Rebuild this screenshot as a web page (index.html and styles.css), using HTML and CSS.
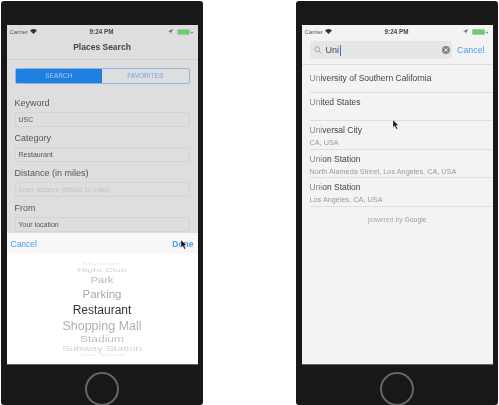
FILE: index.html
```html
<!DOCTYPE html>
<html lang="en">
<head>
    <meta charset="UTF-8">
    <title>Places Search</title>
    <link rel="stylesheet" href="styles.css">
</head>
<body>
    <div class="phone">
        <div class="screen screen-form">
            <div class="status">
                <span class="carrier">Carrier
                    <svg class="wifi" viewBox="0 0 10 7"><path d="M5 7 0 2a7 7 0 0 1 10 0z"/></svg>
                </span>
                <span class="time">9:24 PM</span>
                <span class="status-right">
                    <svg class="arrow" viewBox="0 0 6 6"><path d="M6 0 0 3h3v3z"/></svg>
                    <span class="battery"></span><span class="charge">+</span>
                </span>
            </div>
            <div class="nav">Places Search</div>
            <div class="form">
                <div class="segment">
                    <div class="seg seg-on">SEARCH</div>
                    <div class="seg">FAVORITES</div>
                </div>
                <div class="label label-first">Keyword</div>
                <div class="field">USC</div>
                <div class="label">Category</div>
                <div class="field">Restaurant</div>
                <div class="label">Distance (in miles)</div>
                <div class="field field-empty">Enter distance (default 10 miles)</div>
                <div class="label">From</div>
                <div class="field">Your location</div>
            </div>
            <div class="toolbar">
                <span>Cancel</span>
                <span class="done">Done</span>
            </div>
            <div class="picker">
                <div class="row r1">Museum</div>
                <div class="row r2">Night Club</div>
                <div class="row r3">Park</div>
                <div class="row r4">Parking</div>
                <div class="row r5">Restaurant</div>
                <div class="row r6">Shopping Mall</div>
                <div class="row r7">Stadium</div>
                <div class="row r8">Subway Station</div>
                <div class="row r9">Taxi Stand</div>
            </div>
            <svg class="cursor cursor-left" viewBox="0 0 8 12"><path d="M1 0v9l2-2 2 4 1.500-.7-2-4h3z"/></svg>
        </div>
        <div class="home"></div>
    </div>

    <div class="phone">
        <div class="screen screen-list">
            <div class="status">
                <span class="carrier">Carrier
                    <svg class="wifi" viewBox="0 0 10 7"><path d="M5 7 0 2a7 7 0 0 1 10 0z"/></svg>
                </span>
                <span class="time">9:24 PM</span>
                <span class="status-right">
                    <svg class="arrow" viewBox="0 0 6 6"><path d="M6 0 0 3h3v3z"/></svg>
                    <span class="battery"></span><span class="charge">+</span>
                </span>
            </div>
            <div class="searchbar">
                <div class="searchbox">
                    <svg class="lens" viewBox="0 0 10 10"><circle cx="4" cy="4" r="3"/><path d="M6.300 6.300 9.500 9.500"/></svg>
                    <span class="query">Uni</span><span class="caret"></span>
                    <span class="clear"><svg viewBox="0 0 8 8"><path d="M2.500 2.500l3 3M5.500 2.500l-3 3"/></svg></span>
                </div>
                <span class="search-cancel">Cancel</span>
            </div>
            <div class="results">
                <div class="result result-one"><div class="name"><span class="match">Un</span>iversity of Southern California</div></div>
                <div class="result result-two"><div class="name"><span class="match">Un</span>ited States</div></div>
                <div class="result result-sub">
                    <div class="name"><span class="match">Uni</span>versal City</div>
                    <div class="sub">CA, USA</div>
                </div>
                <div class="result result-sub">
                    <div class="name"><span class="match">Uni</span>on Station</div>
                    <div class="sub">North Alameda Street, Los Angeles, CA, USA</div>
                </div>
                <div class="result result-sub">
                    <div class="name"><span class="match">Uni</span>on Station</div>
                    <div class="sub">Los Angeles, CA, USA</div>
                </div>
            </div>
            <div class="powered">powered by <span class="google">Google</span></div>
            <svg class="cursor cursor-right" viewBox="0 0 8 12"><path d="M1 0v9l2-2 2 4 1.500-.7-2-4h3z"/></svg>
        </div>
        <div class="home"></div>
    </div>
</body>
</html>
```

FILE: styles.css
```css
body {
    margin: 0;
    padding: 1px 1px 0;
    height: 404px;
    overflow: hidden;
    display: flex;
    justify-content: space-between;
    background: #fff;
    font-family: "Liberation Sans", Arial, sans-serif;
    color: #333;
}
.phone {
    width: 202px;
    height: 404px;
    padding-top: 24px;
    box-sizing: border-box;
    background: #181818;
    border-radius: 3px;
    display: flex;
    flex-direction: column;
    align-items: center;
    overflow: hidden;
}
.screen {
    position: relative;
    width: 191px;
    height: 339px;
    flex: none;
    overflow: hidden;
    display: flex;
    flex-direction: column;
    border-bottom: 1px solid #666;
    filter: blur(0.45px);
}
.screen-form {
    background: #dedede;
}
.screen-list {
    background: #f3f3f3;
}
.home {
    width: 30px;
    height: 30px;
    margin-top: 7px;
    flex: none;
    border: 2px solid #666;
    border-radius: 50%;
}

/* status bar */
.status {
    height: 13px;
    flex: none;
    padding: 0 4px 0 3px;
    display: flex;
    align-items: center;
    justify-content: space-between;
    font-size: 6px;
    color: #555;
}
.carrier {
    width: 50px;
    display: flex;
    align-items: center;
    gap: 2px;
}
.wifi {
    width: 7px;
    height: 5px;
    fill: #333;
}
.time {
    font-size: 6.300px;
    font-weight: bold;
    color: #444;
}
.status-right {
    width: 50px;
    display: flex;
    align-items: center;
    justify-content: flex-end;
    gap: 1px;
}
.arrow {
    width: 5px;
    height: 5px;
    margin-right: 3px;
    fill: #555;
}
.battery {
    width: 11px;
    height: 4px;
    background: #5fd75f;
    border: 1px solid #bbb;
    border-radius: 1px;
}
.charge {
    font-size: 5px;
}

/* form screen */
.nav {
    height: 21px;
    flex: none;
    line-height: 19px;
    text-align: center;
    font-size: 8.500px;
    font-weight: bold;
    color: #444;
    border-bottom: 1px solid #cfcfcf;
}
.form {
    height: 173px;
    flex: none;
    padding: 8px 8px 0;
    box-sizing: border-box;
    overflow: hidden;
}
.segment {
    height: 16px;
    display: flex;
    box-sizing: border-box;
    border: 1px solid #8ab8ea;
    border-radius: 2px;
    overflow: hidden;
}
.seg {
    flex: 1;
    line-height: 14px;
    text-align: center;
    font-size: 6.500px;
    color: #6ea6e2;
}
.seg-on {
    background: #1f7fe0;
    color: #a9cdf2;
}
.label {
    height: 20px;
    line-height: 23px;
    font-size: 9px;
    color: #555;
}
.label-first {
    height: 28px;
    line-height: 38px;
}
.field {
    height: 15px;
    padding-left: 3px;
    box-sizing: border-box;
    line-height: 14px;
    font-size: 7px;
    color: #555;
    border: 1px solid #d4d4d4;
    border-radius: 2px;
}
.field-empty {
    color: #c4c4c4;
    font-size: 6.400px;
}
.toolbar {
    height: 21px;
    flex: none;
    padding: 0 4px;
    display: flex;
    align-items: center;
    justify-content: space-between;
    background: #f7f7f7;
    font-size: 8.500px;
    color: #4a9bec;
}
.done {
    font-weight: bold;
}

/* the wheel: rows get flatter away from the selected one */
.picker {
    flex: 1;
    background: #fff;
    overflow: hidden;
    padding-top: 8px;
}
.row {
    text-align: center;
    white-space: nowrap;
}
.r1 { height: 4px; line-height: 4px; font-size: 10px; transform: scaleY(.3); color: #e8e8e8; }
.r2 { height: 7px; line-height: 7px; font-size: 10.500px; transform: scaleY(.55); color: #d0d0d0; margin-top: 1px; }
.r3 { height: 12px; line-height: 12px; font-size: 11px; transform: scaleY(.85); color: #b8b8b8; }
.r4 { height: 16px; line-height: 16px; font-size: 11.500px; color: #a8a8a8; }
.r5 { height: 16px; line-height: 16px; font-size: 12px; color: #333; }
.r6 { height: 16px; line-height: 16px; font-size: 12.500px; color: #b0b0b0; }
.r7 { height: 11px; line-height: 11px; font-size: 12px; transform: scaleY(.8); color: #c0c0c0; }
.r8 { height: 8px; line-height: 8px; font-size: 11.500px; transform: scaleY(.55); color: #d0d0d0; }
.r9 { height: 4px; line-height: 4px; font-size: 10px; transform: scaleY(.3); color: #e8e8e8; }
.cursor {
    position: absolute;
    width: 7px;
    height: 10px;
    fill: #111;
    stroke: #fff;
    stroke-width: 0.4;
}
.cursor-left {
    left: 173px;
    top: 215px;
}
.cursor-right {
    left: 90px;
    top: 95px;
}

/* search screen */
.searchbar {
    height: 27px;
    flex: none;
    padding: 3px 8px 0;
    box-sizing: border-box;
    display: flex;
    align-items: flex-start;
    justify-content: space-between;
    border-bottom: 1px solid #dcdcdc;
}
.searchbox {
    width: 142px;
    height: 18px;
    padding: 0 2px 0 4px;
    box-sizing: border-box;
    display: flex;
    align-items: center;
    background: #e6e6e6;
    border-radius: 4px;
}
.lens {
    width: 8px;
    height: 8px;
    margin-right: 4px;
    fill: none;
    stroke: #999;
    stroke-width: 1;
}
.query {
    font-size: 9px;
    color: #444;
}
.caret {
    width: 1px;
    height: 11px;
    margin-left: 1px;
    background: #2a7de0;
}
.clear {
    width: 8px;
    height: 8px;
    margin-left: auto;
    display: flex;
    background: #888;
    border-radius: 50%;
}
.clear svg {
    fill: none;
    stroke: #e6e6e6;
    stroke-width: 1;
}
.search-cancel {
    margin-top: 4px;
    font-size: 8.800px;
    color: #4a9bec;
}
.results {
    margin-left: 8px;
}
.result {
    box-sizing: border-box;
    border-bottom: 1px solid #dfdfdf;
}
.result-one {
    height: 28px;
    padding-top: 7px;
}
.result-two {
    height: 28px;
    padding-top: 3px;
}
.result-sub {
    height: 28.500px;
    padding-top: 3px;
}
.name {
    font-size: 8.500px;
    line-height: 12px;
    color: #444;
}
.match {
    color: #888;
}
.sub {
    margin-top: 2px;
    font-size: 7.300px;
    line-height: 10px;
    color: #999;
}
.powered {
    margin-top: 9px;
    text-align: center;
    font-size: 6.800px;
    color: #aaa;
}
.google {
    color: #999;
}
```
